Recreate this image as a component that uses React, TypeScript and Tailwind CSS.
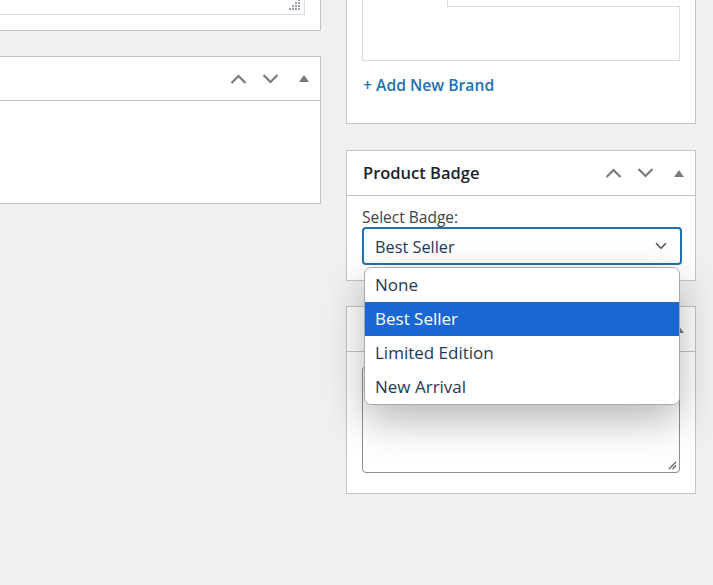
import { ChevronDown } from "lucide-react";

const options = ["None", "Best Seller", "Limited Edition", "New Arrival"];

function ChevronUpIcon() {
  return (
    <svg width="17" height="10" viewBox="0 0 17 10" fill="none">
      <path d="M1.5 9 L8.5 2 L15.5 9" stroke="#787c82" strokeWidth="2.2" />
    </svg>
  );
}

function ChevronDownIcon() {
  return (
    <svg width="17" height="10" viewBox="0 0 17 10" fill="none">
      <path d="M1.5 1 L8.5 8 L15.5 1" stroke="#787c82" strokeWidth="2.2" />
    </svg>
  );
}

function Triangle() {
  return (
    <svg width="10" height="7" viewBox="0 0 10 7">
      <path d="M5 0 L10 7 L0 7 Z" fill="#787c82" />
    </svg>
  );
}

function HeaderActions() {
  return (
    <div className="ml-auto flex items-center pr-[11px]">
      <ChevronUpIcon />
      <span className="w-[15px]" />
      <ChevronDownIcon />
      <span className="w-[20px]" />
      <Triangle />
    </div>
  );
}

function PanelHeader({ title, h }: { title?: string; h: string }) {
  return (
    <div className={`flex items-center border-b border-[#c3c4c7] pl-[16px] ${h}`}>
      {title && (
        <h2 className="text-[16.5px] font-semibold text-[#1d2327]">{title}</h2>
      )}
      <HeaderActions />
    </div>
  );
}

export default function App() {
  return (
    <div className="relative min-h-[585px] overflow-hidden bg-[#f0f0f1] font-['Open_Sans',sans-serif]">
      <div className="flex gap-[25px]">
        {/* Left column */}
        <div className="-ml-[30px] w-[351px] shrink-0">
          <div className="relative h-[31px] border-r border-b border-[#c3c4c7] bg-white">
            <div className="relative mr-[15px] h-[15px] border-r border-b border-[#dcdcde]">
              <svg className="absolute right-[3px] bottom-[3px]" width="12" height="11" viewBox="0 0 12 11">
                {[0, 1, 2, 3].map((r) =>
                  [0, 1, 2, 3].filter((c) => c >= 3 - r).map((c) => (
                    <rect key={`${r}-${c}`} x={c * 3} y={r * 3 - 1} width="2" height="2" fill="#9aa3b0" />
                  ))
                )}
              </svg>
            </div>
          </div>
          <div className="mt-[25px] border border-[#c3c4c7] bg-white">
            <PanelHeader h="h-[44px]" />
            <div className="h-[102px]" />
          </div>
        </div>

        {/* Right column */}
        <div className="w-[350px] shrink-0">
          <div className="h-[124px] border-x border-b border-[#c3c4c7] bg-white px-[15px]">
            <div className="flex h-[6px]">
              <div className="relative z-10 -mb-px h-[7px] w-[86px] border-x border-[#dcdcde] bg-white" />
            </div>
            <div className="h-[55px] border border-[#dcdcde]" />
            <div className="mt-[14px] h-[20px] pl-px text-[15.7px] leading-[20px] font-semibold text-[#2271b1]">
              + Add New Brand
            </div>
          </div>

          <div className="mt-[26px] border border-[#c3c4c7] bg-white">
            <PanelHeader title="Product Badge" h="h-[45px]" />
            <div className="px-[15px] pt-[11px] pb-[15px]">
              <div className="h-[20px] text-[15.5px] leading-[20px] text-[#3c434a]">Select Badge:</div>
              <div className="flex h-[38px] w-[320px] items-center rounded-[4px] border-2 border-[#2271b1] pt-[3px] pr-[10px] pl-[11px]">
                <span className="text-[16.3px] text-[#1e3a56]">Best Seller</span>
                <ChevronDown className="ml-auto -mt-[3px] h-[18px] w-[18px] text-[#50575e]" strokeWidth={2.2} />
              </div>
            </div>
          </div>

          <div className="mt-[25px] border border-[#c3c4c7] bg-white">
            <PanelHeader title="Product Notes" h="h-[45px]" />
            <div className="px-[15px] pt-[14px] pb-[20px]">
              <div className="relative h-[107px] rounded-[4px] border border-[#8c8f94] bg-white">
                <svg className="absolute right-[2px] bottom-[2px]" width="9" height="9" viewBox="0 0 9 9">
                  <path d="M1 8 L8 1 M4.5 8 L8 4.5" stroke="#5a5f66" strokeWidth="1.3" />
                </svg>
              </div>
            </div>
          </div>
        </div>
      </div>

      {/* Open select list */}
      <ul className="absolute top-[267px] left-[364px] w-[316px] overflow-hidden rounded-[7px] border border-[#a9a9a9] bg-white shadow-[0_16px_40px_rgba(0,0,0,0.28)]">
        {options.map((o) => (
          <li
            key={o}
            className={`flex h-[34px] items-center pl-[10px] text-[17px] ${
              o === "Best Seller" ? "bg-[#1967d2] text-white" : "text-[#1e3a56]"
            }`}
          >
            {o}
          </li>
        ))}
      </ul>
    </div>
  );
}
